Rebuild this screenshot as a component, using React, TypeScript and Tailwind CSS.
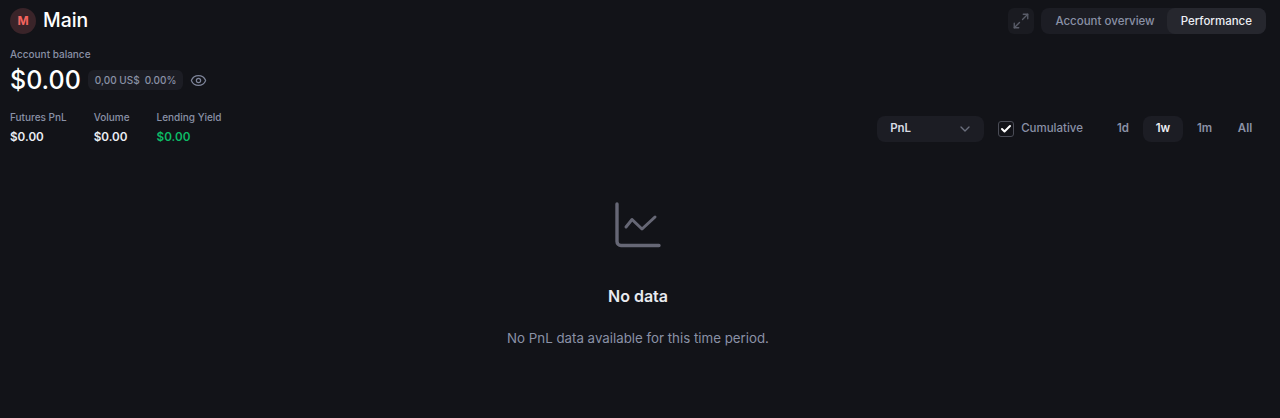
import { Check, ChevronDown, Eye, Maximize2 } from 'lucide-react'

function Stat({ label, value, green }: { label: string; value: string; green?: boolean }) {
  return (
    <div className="flex flex-col gap-[4px]">
      <div className="text-[10px] leading-[14px] font-medium text-[#8a91a6]">{label}</div>
      <div className={`text-[11.7px] leading-[18px] font-semibold ${green ? 'text-[#0cbb66]' : 'text-[#eceef3]'}`}>{value}</div>
    </div>
  )
}

export default function App() {
  return (
    <div className="w-[1280px] h-[418px] overflow-hidden bg-[#121318] font-['Inter',sans-serif] pl-[10px] pr-[14px] pt-[7px] flex flex-col">
      {/* Top row */}
      <div className="flex items-center justify-between h-[27px]">
        <div className="flex items-center gap-[7px]">
          <div className="w-[26px] h-[26px] rounded-full bg-[#3a2429] flex items-center justify-center text-[#f4645f] text-[12px] font-bold">M</div>
          <div className="text-[19.4px] leading-[27px] font-medium text-white">Main</div>
        </div>
        <div className="flex items-center gap-[7px]">
          <div className="w-[26px] h-[26px] rounded-md bg-[#1a1b21] flex items-center justify-center text-[#5a5d69]">
            <Maximize2 size={18} strokeWidth={1.75} />
          </div>
          <div className="flex items-center h-[26px] rounded-lg bg-[#1c1d24] text-[11.5px] font-medium">
            <div className="pl-[14px] pr-[12px] pt-[2px] text-[#8a91a6]">Account overview</div>
            <div className="h-full px-[14px] pt-[2px] flex items-center rounded-lg bg-[#26272e] text-[#eceef3]">Performance</div>
          </div>
        </div>
      </div>

      {/* Balance */}
      <div className="mt-[13px] text-[10px] leading-[14px] font-medium text-[#8a91a6]">Account balance</div>
      <div className="mt-[5px] flex items-center h-[28px]">
        <div className="text-[25px] leading-[28px] font-medium text-white">$0.00</div>
        <div className="ml-[7px] h-[20px] px-[7px] flex items-center gap-[5px] rounded-md bg-[#1c1d24] text-[10px] font-medium text-[#8a91a6]">
          <span>0,00 US$</span>
          <span>0.00%</span>
        </div>
        <Eye className="ml-[7px] text-[#7d8499]" size={17} strokeWidth={1.75} />
      </div>

      {/* Stats and chart controls */}
      <div className="mt-[16px] flex items-center justify-between">
        <div className="flex items-start gap-[27px]">
          <Stat label="Futures PnL" value="$0.00" />
          <Stat label="Volume" value="$0.00" />
          <Stat label="Lending Yield" value="$0.00" green />
        </div>
        <div className="flex items-center mt-[2px]">
          <div className="w-[107px] h-[26px] px-[13px] flex items-center justify-between rounded-lg bg-[#1c1d24] text-[11.5px] font-semibold text-[#d8dbe3]">
            <span>PnL</span>
            <ChevronDown className="text-[#6b6f7d] -mr-[2px]" size={16} strokeWidth={2} />
          </div>
          <div className="ml-[14px] w-[16px] h-[16px] rounded-[3px] border border-[#4a4c56] bg-[#121318] flex items-center justify-center text-white">
            <Check size={12} strokeWidth={4} />
          </div>
          <div className="ml-[7px] text-[11.5px] font-medium text-[#8a91a6]">Cumulative</div>
          <div className="ml-[20px] flex items-center text-[11.5px] font-semibold text-[#8a91a6]">
            <div className="w-[40px] h-[26px] flex items-center justify-center">1d</div>
            <div className="w-[40px] h-[26px] flex items-center justify-center rounded-lg bg-[#1c1d24] text-[#eceef3]">1w</div>
            <div className="w-[43px] h-[26px] flex items-center justify-center">1m</div>
            <div className="w-[40px] h-[26px] pr-[2px] flex items-center justify-center">All</div>
          </div>
        </div>
      </div>

      {/* Empty state */}
      <div className="mt-[56px] flex flex-col items-center">
        <svg width="46" height="46" viewBox="0 0 46 46" fill="none" stroke="#666775" strokeWidth="3.4" strokeLinecap="round" strokeLinejoin="round">
          <path d="M2 2v37.5a4 4 0 0 0 4 4h38" />
          <path d="M11 25l6-7.5 10 9.5 13-12" strokeWidth="3" />
        </svg>
        <div className="mt-[36px] text-[16px] leading-[24px] font-semibold text-[#e8eaef]">No data</div>
        <div className="mt-[20px] text-[13.3px] leading-[20px] text-[#8a91a6]">No PnL data available for this time period.</div>
      </div>
    </div>
  )
}
